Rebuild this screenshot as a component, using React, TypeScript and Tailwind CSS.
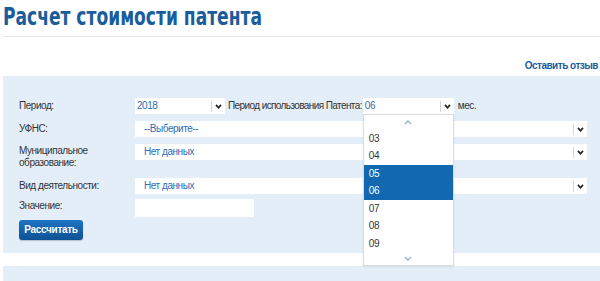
import React from 'react';

function Chevron({ className = '' }: { className?: string }) {
  return (
    <svg viewBox="0 0 8 6" className={className} fill="none" stroke="currentColor" strokeWidth="2">
      <polyline points="1,1 4,4.5 7,1" />
    </svg>
  );
}

function Select({ value, width, pad = 'pl-[9px]' }: { value: string; width: string; pad?: string }) {
  return (
    <div className={`flex h-[16px] items-center bg-white ${width}`}>
      <span className={`flex-1 text-[10px] leading-none text-[#2f6db3] ${pad}`}>{value}</span>
      <span className="h-[11px] w-px bg-[#d4d4d4]" />
      <span className="flex w-[13px] justify-center text-[#222]">
        <Chevron className="h-[5px] w-[7px]" />
      </span>
    </div>
  );
}

const months = ['03', '04', '05', '06', '07', '08', '09'];

export default function App() {
  return (
    <div
      className="relative h-[281px] w-[600px] overflow-hidden bg-white text-[#333]"
      style={{ fontFamily: '"Liberation Sans", Arial, sans-serif' }}
    >
      {/* Title */}
      <div className="pl-[3px] pt-[3px]">
        <h1
          className="inline-block origin-left scale-x-[0.76] whitespace-nowrap text-[25px] font-bold leading-[28px] text-[#1b5d9c]"
          style={{ fontFamily: '"DejaVu Sans Condensed", "Liberation Sans", sans-serif' }}
        >
          Расчет стоимости патента
        </h1>
      </div>
      <div className="ml-[2px] mt-[4px] h-px bg-[#e6e6e6]" />

      <div className="flex justify-end pr-[2px] pt-[22px]">
        <a className="text-[10px] font-bold leading-[13px] tracking-[-0.5px] text-[#1b5d9c]">Оставить отзыв</a>
      </div>

      {/* Form panel */}
      <div className="ml-[3px] mt-[4px] bg-[#e4eef9] pb-[13px] pl-[16px] pt-[22px] text-[10px] leading-[12px] tracking-[-0.45px]">
        <div className="flex items-center">
          <div className="w-[116px]">Период:</div>
          <Select value="2018" width="w-[90px]" pad="pl-[2px]" />
          <span className="ml-[3px] whitespace-nowrap tracking-[-0.6px]">Период использования Патента:</span>
          <div className="relative ml-[1px]">
            <Select value="06" width="w-[91px]" pad="pl-[2px]" />
            {/* open month list */}
            <div className="absolute left-0 top-[16px] z-10 w-[91px] border border-[#dcdcdc] bg-white shadow-[0_1px_2px_rgba(0,0,0,0.08)]">
              <div className="flex h-[15px] items-center justify-center text-[#8aa6c4]">
                <svg viewBox="0 0 10 6" className="h-[5px] w-[8px]" fill="none" stroke="currentColor" strokeWidth="1.4">
                  <polyline points="1,5 5,1 9,5" />
                </svg>
              </div>
              {months.map((m) => (
                <div
                  key={m}
                  className={`flex h-[17.5px] items-center pl-[5px] ${
                    m === '05' || m === '06' ? 'bg-[#1268b1] text-white' : 'text-[#333]'
                  }`}
                >
                  {m}
                </div>
              ))}
              <div className="flex h-[12px] items-center justify-center text-[#8aa6c4]">
                <svg viewBox="0 0 10 6" className="h-[5px] w-[8px]" fill="none" stroke="currentColor" strokeWidth="1.4">
                  <polyline points="1,1 5,5 9,1" />
                </svg>
              </div>
            </div>
          </div>
          <span className="ml-[4px]">мес.</span>
        </div>

        <div className="mt-[7px] flex items-center">
          <div className="w-[116px]">УФНС:</div>
          <Select value="--Выберите--" width="w-[452px]" />
        </div>

        <div className="mt-[7px] flex items-start">
          <div className="w-[116px] pt-[1px]">
            Муниципальное
            <br />
            образование:
          </div>
          <Select value="Нет данных" width="w-[452px]" />
        </div>

        <div className="mt-[9px] flex items-center">
          <div className="w-[116px]">Вид деятельности:</div>
          <Select value="Нет данных" width="w-[452px]" />
        </div>

        <div className="mt-[5px] flex items-start">
          <div className="w-[116px] pt-[1px]">Значение:</div>
          <div className="h-[18px] w-[119px] bg-white" />
        </div>

        <button className="mt-[3px] flex h-[20px] w-[64px] items-center justify-center rounded-[3px] bg-gradient-to-b from-[#1d74c4] to-[#0e5293] text-[10px] font-bold tracking-[-0.3px] text-white shadow-[0_1px_1px_rgba(0,0,0,0.2)]">
          Рассчитать
        </button>
      </div>

      <div className="ml-[3px] mt-[13px] h-[20px] bg-[#e4eef9]" />
    </div>
  );
}
